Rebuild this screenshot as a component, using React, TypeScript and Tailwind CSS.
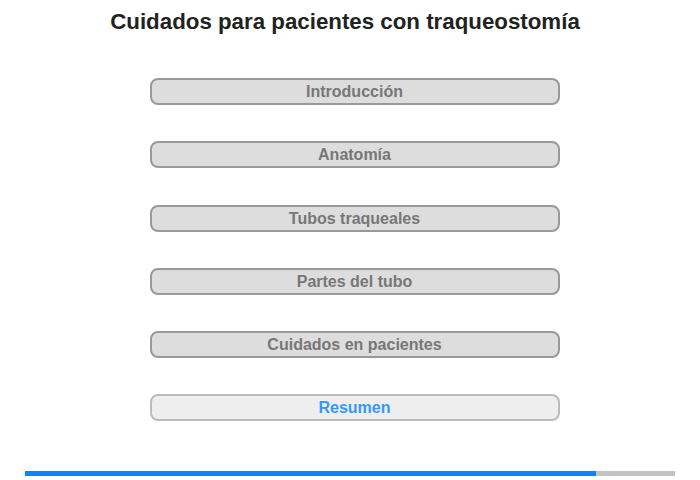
const sections = [
  { label: "Introducción", done: true },
  { label: "Anatomía", done: true },
  { label: "Tubos traqueales", done: true },
  { label: "Partes del tubo", done: true },
  { label: "Cuidados en pacientes", done: true },
  { label: "Resumen", done: false },
];

export default function App() {
  return (
    <div className="flex h-[480px] w-[700px] flex-col bg-white font-['Liberation_Sans',Arial,sans-serif]">
      <h1 className="mt-[9px] pr-[10px] text-center text-[22.3px] font-bold leading-[26px] text-[#222]">
        Cuidados para pacientes con traqueostomía
      </h1>

      <div className="mt-[43px] flex flex-col items-center gap-[36.3px] pl-[9px]">
        {sections.map((s) =>
          s.done ? (
            <button
              key={s.label}
              className="h-[27px] w-[410px] rounded-[8px] border-2 border-[#999] bg-[#ddd] text-[16px] font-bold leading-[23px] text-[#777]"
            >
              {s.label}
            </button>
          ) : (
            <button
              key={s.label}
              className="h-[27px] w-[410px] rounded-[8px] border-2 border-[#bbb] bg-[#eee] text-[16px] font-bold leading-[23px] text-[#3399ff]"
            >
              {s.label}
            </button>
          )
        )}
      </div>

      <div className="mx-[25px] mt-[50px] flex h-[5px] bg-[#c4c4c4]">
        <div className="h-full w-[571px] bg-[#0a84ff]" />
      </div>
    </div>
  );
}
